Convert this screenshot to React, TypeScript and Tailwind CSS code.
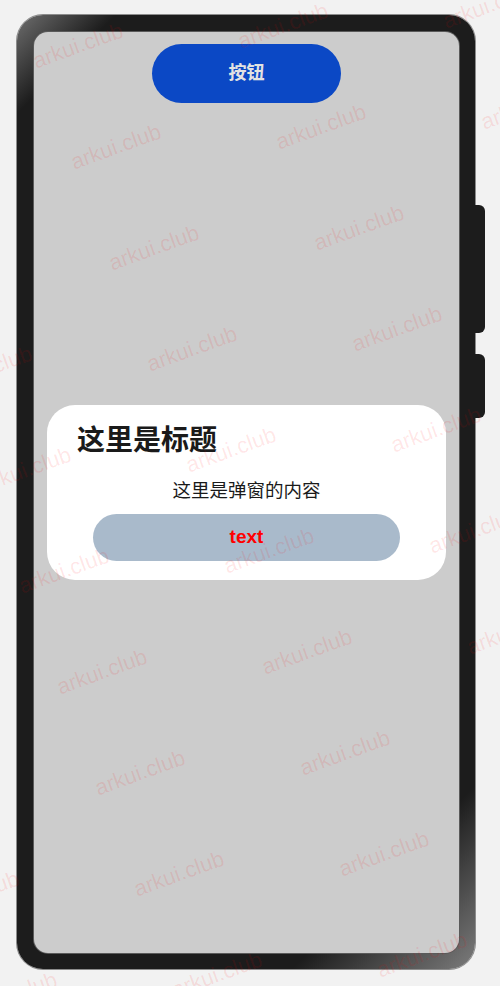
const marks: { x: number; y: number }[] = []
for (let k = -2; k <= 2; k++) {
  for (let j = -3; j <= 9; j++) {
    const x = 154 + 38.25 * j + 205 * k
    const y = 248 + 101 * j - 20 * k
    if (x > -80 && x < 580 && y > -40 && y < 1030) marks.push({ x, y })
  }
}

function Watermarks() {
  return (
    <div className="absolute inset-0 pointer-events-none overflow-hidden z-10">
      {marks.map((m, i) => (
        <span
          key={i}
          className="absolute -translate-x-1/2 -translate-y-1/2 -rotate-[20deg] whitespace-nowrap text-[22px] leading-none text-[rgba(255,0,0,0.1)] font-['Liberation_Sans',sans-serif]"
          style={{ left: m.x, top: m.y }}
        >
          arkui.club
        </span>
      ))}
    </div>
  )
}

function Dialog() {
  return (
    <div className="absolute inset-0 flex items-center justify-center">
      <div className="w-[399px] h-[175px] rounded-[28px] bg-white flex flex-col pt-[18px]">
        <h1 className="pl-[30px] h-[36px] leading-[36px] text-[28px] font-bold text-[#1a1a1a]">
          这里是标题
        </h1>
        <p className="mt-[20px] h-[24px] leading-[24px] text-[18.5px] text-center text-[#1a1a1a]">
          这里是弹窗的内容
        </p>
        <button className="mt-[11px] mx-auto w-[307px] h-[47px] rounded-full bg-[#a9bacb] text-[19px] font-bold text-[#ff0000]">
          text
        </button>
      </div>
    </div>
  )
}

export default function App() {
  return (
    <div className="relative w-[500px] h-[986px] overflow-hidden bg-[#f2f2f2] pl-[17px] pt-[15px] font-['Liberation_Sans','Noto_Sans_CJK_SC',sans-serif]">
      <div className="flex">
        <div className="w-[458px] h-[954px] rounded-[26px] p-[17px] pr-[16px] pb-[16px] flex flex-col shadow-[0_0_0_1px_#8c8c8c] bg-[linear-gradient(135deg,#6e6e6e_0%,#1c1c1c_7%,#1c1c1c_87%,#7c7c7c_100%)]">
          <div className="relative flex-1 rounded-[14px] bg-[#cccccc] flex flex-col items-center shadow-[0_0_0_1px_#5a5a5a]">
            <button className="mt-[12px] w-[189px] h-[59px] rounded-full bg-[#0b48c5] text-[18px] font-bold text-[#e2e2e2]">
              按钮
            </button>
            <Dialog />
          </div>
        </div>
        <div className="flex flex-col mt-[190px] gap-[21px]">
          <div className="w-[10px] h-[128px] rounded-r-[6px] bg-[#1c1c1c]" />
          <div className="w-[10px] h-[64px] rounded-r-[6px] bg-[#1c1c1c]" />
        </div>
      </div>
      <Watermarks />
    </div>
  )
}
